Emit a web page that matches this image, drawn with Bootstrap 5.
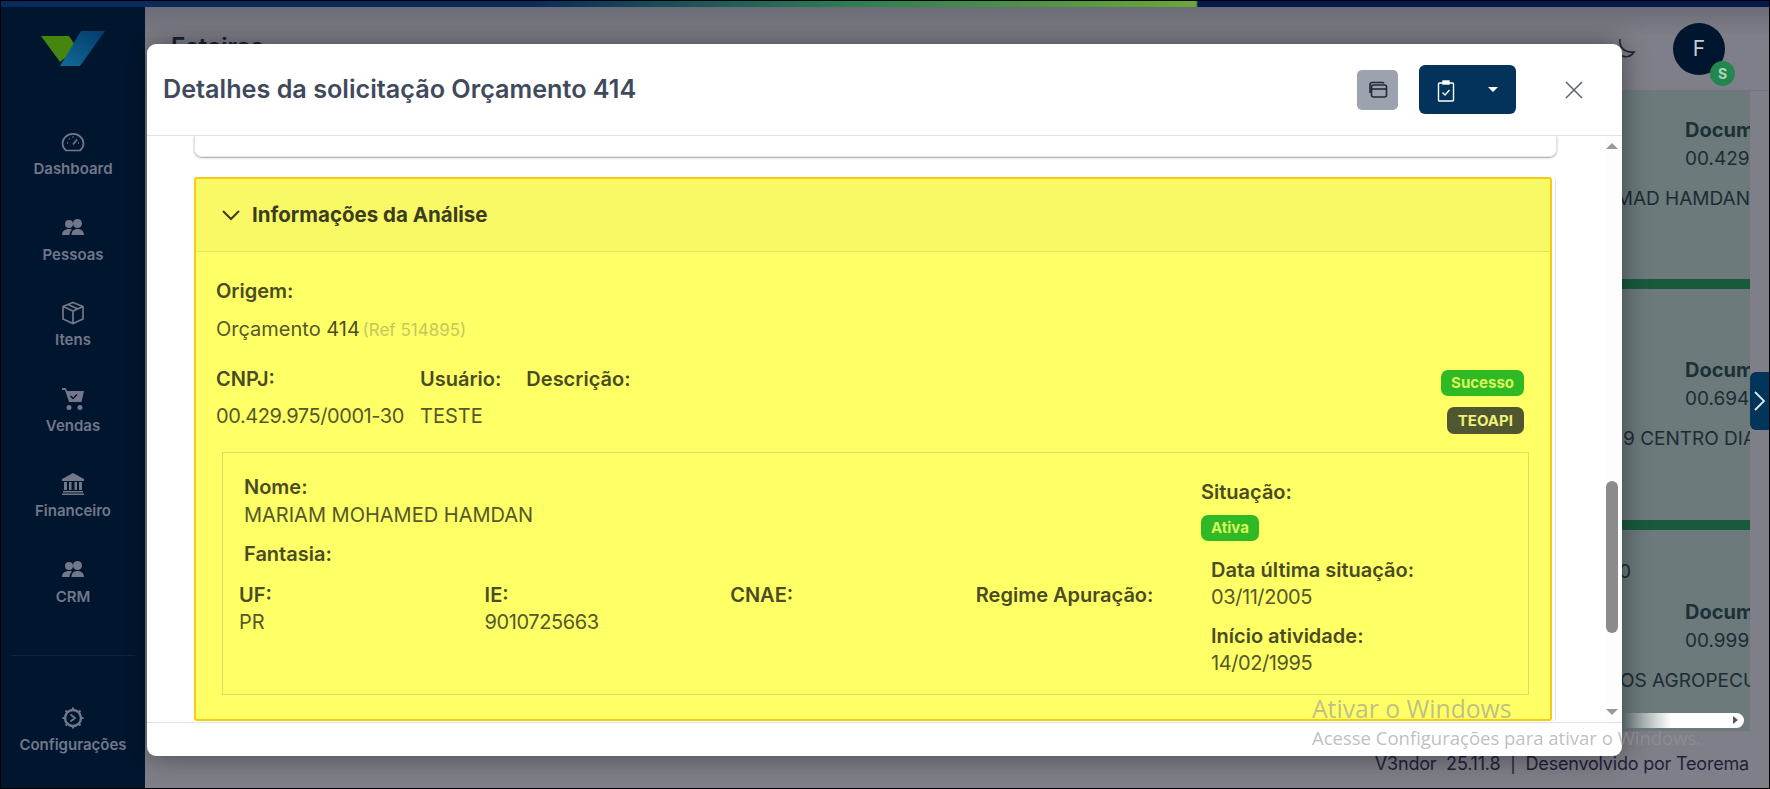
<!DOCTYPE html>
<html lang="pt-BR">
<head>
<meta charset="utf-8">
<title>Detalhes da solicitação</title>
<link href="https://cdn.jsdelivr.net/npm/bootstrap@5.3.0/dist/css/bootstrap.min.css" rel="stylesheet">
<style>
html,body{height:100%;overflow:hidden}
body{font-family:Inter,"Liberation Sans",sans-serif;background:#7f7f89;border:1px solid #000;position:relative}
.topstrip{height:6px;background:linear-gradient(90deg,#0a2a5c 0,#0a2a5c 30%,#2e7d55 48%,#6aa83a 67.6%,#04194c 67.7%,#04194c 100%)}
.shell{height:calc(100% - 6px)}
.sidemenu{width:144px;background:#00162f;color:#73778a;flex:none}
.brandbox{height:123px;flex:none}
.sideitem{height:85.6px;font-size:15px;font-weight:600;flex:none}
.sideitem svg{width:24px;height:24px;margin-bottom:4px}
.sidesep{border-top:1px solid #0e2540;margin:11px 10px 0;flex:none}
.sideitem.sidefoot{margin-top:50px;height:60px}
.mainarea{background:#7f7f89;min-width:0}
.appbar{height:84px;background:linear-gradient(#6c6c76,#7f7f89 35%);border-bottom:1px solid #74747e;padding-right:20px}
.apptitle{font-size:24px;font-weight:600;color:#1d2233;margin-left:26px;margin-top:-4px}
.moonmark{position:absolute;left:1611px;top:36px}
.avatarf{width:52px;height:52px;border-radius:50%;background:#00162f;color:#c9cdd6;font-size:21px;position:relative}
.avatars{position:absolute;right:-10px;bottom:-11px;width:25px;height:25px;border-radius:50%;background:#23864f;color:#a9d8b9;font-size:14px;font-weight:700}
.listpane{background:#6c7a7c;margin:0 19px 0 3px;height:640px;overflow:hidden;position:relative;color:#1c2c33;font-size:19px;line-height:28px}
.docblock{padding-left:1537px;height:188px;white-space:nowrap}
.docblock.midblock{height:231px}
.docblock.lastblock{height:200px}
.docblock b{display:block;font-weight:700;font-size:20px;color:#1b3135;padding-top:25px}
.docblock.midblock b{padding-top:67px}
.docblock.lastblock b{padding-top:68px}
.docdigits{display:block;margin-top:1px}
.docname{position:absolute;white-space:nowrap;margin-top:12px}
.nameone{right:0}
.nametwo{left:1475px}
.namethree{left:1472px}
.orphanzero{position:absolute;left:1471px;top:467px}
.greenbar{height:10px;background:#195a3d}
.hscroll{position:absolute;left:1475px;right:6px;top:622px;height:15px;background:linear-gradient(90deg,#6c7a7c,#fff 40%);border-radius:0 8px 8px 0}
.hscroll:after{content:"";position:absolute;right:6px;top:3px;border-left:5px solid #555;border-top:4px solid transparent;border-bottom:4px solid transparent}
.pagefoot{font-size:18px;letter-spacing:-.2px;line-height:30px;color:#1e2238;text-align:right;padding:18px 20px 0 0;white-space:nowrap}
.sidetab{position:absolute;right:0;top:365px;width:19px;height:58px;background:#03355a;border-radius:6px 0 0 6px;color:#fff}

.modalbox{position:absolute;left:146px;top:43px;width:1475px;height:712px;background:#fff;border-radius:9px;box-shadow:0 0 28px rgba(0,0,0,.45);z-index:5}
.modalhead{height:92px;border-bottom:1px solid #dfe1e8;padding:0 39px 0 16px}
.modalhead h5{font-size:25.2px;font-weight:600;color:#3f4a5c;margin:0}
.btnwin{width:41px;height:40px;background:#9ca3af;border:0;border-radius:5px;margin-right:21px;padding:0}
.btnnavy{width:97px;height:49px;background:#03335a;border:0;border-radius:6px;margin-right:49px;padding:0}
.btnnavy:after{content:"";display:inline-block;border-top:5px solid #fff;border-left:5px solid transparent;border-right:5px solid transparent;margin-left:28px;vertical-align:3px}
.closecross{padding:0;background:none;border:0;line-height:0}
.modalscroll{height:587px;position:relative;overflow:hidden;border-bottom:1px solid #dfe1e8}
.prevcard{height:21px;margin:0 65px 0 47px;border:1px solid #e3e3e6;border-top:0;border-radius:0 0 8px 8px;box-shadow:0 1px 2px rgba(0,0,0,.35)}
.yellowcard{margin:20px 70px 0 47px;height:544px;background:#ffff66;border:2px solid #f5cb15;border-radius:3px;color:#55582a;font-size:20px;box-shadow:3px 0 0 #fff,4px 0 0 #e3e3e6}
.yellowhead{height:73px;background:#f8f965;border-bottom:1px solid #e2e35e;padding-left:25px;color:#3b3d1f;font-size:20.5px;font-weight:700}
.yellowhead svg{margin-right:11px}
.yellowbody{padding:0 0 0 20px;position:relative}
.lbl{font-weight:600;color:#4a4c24;display:block;line-height:27px}
.val{display:block;line-height:27px}
.digitval{letter-spacing:-.42px}
.fadedref{color:#c5c75c;font-size:17px;margin-left:-3px}
.strong414{color:#4a4c24}
.firstlbl{padding-top:26px}
.secondrow{margin-top:22px}
.paircol{margin-right:16px}
.paircol.usercol{margin-right:25px}
.paircol .val{margin-top:10px}
.origval{margin-top:11px}
.pillstack{position:absolute;right:26px;top:118px;gap:11px}
.pillgreen,.pillolive{font-size:15px;font-weight:700;border-radius:7px;padding:0 10px;height:26px;line-height:26px;display:inline-block}
.pillgreen{background:#2fba25;color:#d9f55a}
.pillolive{background:#50562f;color:#eef07a;height:27px;line-height:27px;padding:0 11px}
.innerbox{margin:22px 21px 0 6px;height:243px;border:1px solid #dcde60}
.leftside{width:978px;flex:none}
.topnames{padding:21px 0 0 21px}
.topnames .val{margin-top:1px}
.fantasia{margin-top:12px}
.fourcols{margin:14px 0 0 16px}
.fourcols>div{width:245.6px;flex:none}
.rightside{padding-top:26px}
.pillgreen.activepill{margin:9px 0 16px}
.rightinner{padding-left:10px}
.rightinner .val{margin-bottom:12px}
.vscroll{position:absolute;right:0;top:0;bottom:0;width:16px;background:#fdfdfd}
.arrowup,.arrowdown{position:absolute;left:0;border-left:6px solid transparent;border-right:6px solid transparent}
.arrowup{top:7px;border-bottom:6px solid #999}
.arrowdown{bottom:7px;border-top:6px solid #999}
.thumbbar{position:absolute;left:0;top:345px;width:12px;height:152px;background:#8b8b8b;border-radius:6px}
.watermark{position:absolute;left:1311px;top:692px;z-index:9;color:rgba(150,150,150,.62);font-family:"Open Sans",sans-serif;white-space:nowrap}
.watermark .wm1{font-size:24.7px;line-height:31px}
.watermark .wm2{font-size:18.5px;line-height:27px}
</style>
</head>
<body>
<div class="topstrip"></div>
<div class="shell d-flex">
  <aside class="sidemenu d-flex flex-column">
    <div class="brandbox d-flex justify-content-center pt-4">
      <svg width="64" height="36" viewBox="0 0 64 36"><defs><linearGradient id="lg" x1="0" y1="1" x2="1" y2="0"><stop offset="0" stop-color="#136a9a"/><stop offset="1" stop-color="#023a69"/></linearGradient></defs><path d="M0 5H28L36 17 19 31Z" fill="#46860f"/><path d="M40 0H64L39 35H19Z" fill="url(#lg)"/></svg>
    </div>
    <div class="sideitem d-flex flex-column align-items-center">
      <svg viewBox="0 0 24 24" fill="none" stroke="currentColor" stroke-width="1.7"><path d="M5 20.500a10.500 9.500 0 1 1 14 0Z"/><path d="M12 14.500l4-5M6 13h1M8 8.500l.7.7M12 6.500v1M18 13h-1"/></svg>
      <span>Dashboard</span>
    </div>
    <div class="sideitem d-flex flex-column align-items-center">
      <svg viewBox="0 0 24 24" fill="currentColor"><circle cx="8" cy="8" r="4"/><circle cx="16.500" cy="7.500" r="4.500"/><path d="M1 19c0-4 3-6 7-6 1.500 0 2.500.3 3 .7-1.500 1-2.500 3-2.500 5.300ZM10.500 19c0-4 2.500-6 6-6s6.500 2 6.500 6Z"/></svg>
      <span>Pessoas</span>
    </div>
    <div class="sideitem d-flex flex-column align-items-center">
      <svg viewBox="0 0 24 24" fill="none" stroke="currentColor" stroke-width="1.7"><path d="M12 1.500l10 4v12.500l-10 4.500-10-4.500V5.500ZM2 5.500l10 4.500 10-4.500M12 10v12.500M7 3.500l10 4.500"/></svg>
      <span>Itens</span>
    </div>
    <div class="sideitem d-flex flex-column align-items-center">
      <svg viewBox="0 0 24 24" fill="currentColor"><path d="M1 1h4l1 3h17l-2.500 11H8L4 3H1Z"/><circle cx="8" cy="20.500" r="2.500"/><circle cx="19" cy="20.500" r="2.500"/><path d="M9.500 9l2.500 2.500 4-4" fill="none" stroke="#00162f" stroke-width="1.400"/></svg>
      <span>Vendas</span>
    </div>
    <div class="sideitem d-flex flex-column align-items-center">
      <svg viewBox="0 0 24 24" fill="currentColor"><path d="M12 1l11 6v2H1V7Z"/><path d="M3 10h3v8H3ZM8 10h2.500v8H8ZM13.500 10H16v8h-2.500ZM18 10h3v8h-3ZM2 19h20v1.500H2ZM1 21.500h22V23H1Z"/></svg>
      <span>Financeiro</span>
    </div>
    <div class="sideitem d-flex flex-column align-items-center">
      <svg viewBox="0 0 24 24" fill="currentColor"><circle cx="8" cy="8" r="4"/><circle cx="16.500" cy="7.500" r="4.500"/><path d="M1 19c0-4 3-6 7-6 1.500 0 2.500.3 3 .7-1.500 1-2.500 3-2.500 5.300ZM10.500 19c0-4 2.500-6 6-6s6.500 2 6.500 6Z"/></svg>
      <span>CRM</span>
    </div>
    <div class="sidesep"></div>
    <div class="sideitem sidefoot d-flex flex-column align-items-center">
      <svg viewBox="0 0 24 24" fill="none" stroke="currentColor" stroke-width="2.400"><circle cx="12" cy="12" r="8"/><path d="M12 1.500v3M12 19.500v3M1.500 12h3M19.500 12h3M4.500 4.500l2 2M17.500 17.500l2 2M4.500 19.500l2-2M17.500 6.500l2-2" stroke-width="2"/><path d="M9.500 8.500l4.500 3.500-4.500 3.500" stroke-width="1.800"/></svg>
      <span>Configurações</span>
    </div>
  </aside>
  <main class="mainarea flex-grow-1 position-relative">
    <div class="appbar d-flex align-items-center justify-content-between">
      <div class="apptitle">Esteiras</div>
      <div class="avatarf d-flex align-items-center justify-content-center me-4">F<span class="avatars d-flex align-items-center justify-content-center">S</span></div>
    </div>
    <div class="listpane">
      <div class="docblock"><b>Documento</b><span class="docdigits">00.429.975/0001-30</span><span class="docname nameone">MARIAM MOHAMAD HAMDAN</span></div>
      <div class="greenbar"></div>
      <div class="docblock midblock"><b>Documento</b><span class="docdigits">00.694.000/0001-19</span><span class="docname nametwo">9 CENTRO DIAGNOSTICO</span></div>
      <div class="greenbar"></div>
      <div class="docblock lastblock"><b>Documento</b><span class="docdigits">00.999.000/0001-00</span><span class="docname namethree">OS AGROPECUARIOS LTDA</span></div>
      <span class="orphanzero">0</span>
      <div class="hscroll"></div>
    </div>
    <div class="pagefoot">V3ndor&nbsp; 25.11.8 &nbsp;|&nbsp; Desenvolvido por Teorema</div>
    <div class="sidetab d-flex align-items-center justify-content-center">
      <svg width="13" height="22" viewBox="0 0 13 22" fill="none" stroke="#dfe6ee" stroke-width="1.800"><path d="M2 2l9 9-9 9"/></svg>
    </div>
  </main>
</div>
<svg class="moonmark" width="24" height="24" viewBox="0 0 24 24" fill="none" stroke="#23263a" stroke-width="1.600"><path d="M8 2c-1 8 4 14 14 13-3 5-9 6-13 3"/></svg>

<div class="modalbox d-flex flex-column">
  <div class="modalhead d-flex align-items-center">
    <h5 class="flex-grow-1">Detalhes da solicitação Orçamento 414</h5>
    <button class="btnwin d-flex align-items-center justify-content-center" type="button">
      <svg width="20" height="20" viewBox="0 0 20 20" fill="none" stroke="#23283a" stroke-width="1.600"><path d="M2 13V4.500A2 2 0 0 1 4 2.500h10a2 2 0 0 1 2 .8"/><rect x="3.500" y="5" width="15" height="12" rx="2"/><path d="M3.500 9h15"/></svg>
    </button>
    <button class="btnnavy" type="button">
      <svg width="18" height="22" viewBox="0 0 18 22" fill="none" stroke="#fff" stroke-width="1.400"><rect x="1.500" y="3" width="15" height="18" rx="1"/><rect x="6" y="1" width="6" height="3" fill="#fff"/><path d="M5.500 12.500l2.500 2.500 4.500-5"/></svg>
    </button>
    <button class="closecross" type="button" aria-label="Fechar">
      <svg width="18" height="18" viewBox="0 0 18 18" stroke="#5b6270" stroke-width="1.500"><path d="M1 1l16 16M17 1L1 17"/></svg>
    </button>
  </div>
  <div class="modalscroll">
    <div class="prevcard"></div>
    <div class="yellowcard">
      <div class="yellowhead d-flex align-items-center">
        <svg width="20" height="12" viewBox="0 0 20 12" fill="none" stroke="#3b3d1f" stroke-width="2"><path d="M2 2l8 8 8-8"/></svg>
        Informações da Análise
      </div>
      <div class="yellowbody">
        <div class="firstlbl">
          <span class="lbl">Origem:</span>
          <span class="val origval">Orçamento <span class="strong414">414</span> <span class="fadedref">(Ref 514895)</span></span>
        </div>
        <div class="d-flex secondrow">
          <div class="paircol"><span class="lbl">CNPJ:</span><span class="val digitval">00.429.975/0001-30</span></div>
          <div class="paircol usercol"><span class="lbl">Usuário:</span><span class="val">TESTE</span></div>
          <div class="paircol"><span class="lbl">Descrição:</span></div>
        </div>
        <div class="pillstack d-flex flex-column align-items-end">
          <span class="pillgreen">Sucesso</span>
          <span class="pillolive">TEOAPI</span>
        </div>
        <div class="innerbox d-flex">
          <div class="leftside">
            <div class="topnames">
              <span class="lbl">Nome:</span>
              <span class="val">MARIAM MOHAMED HAMDAN</span>
              <span class="lbl fantasia">Fantasia:</span>
            </div>
            <div class="fourcols d-flex">
              <div><span class="lbl">UF:</span><span class="val">PR</span></div>
              <div><span class="lbl">IE:</span><span class="val digitval">9010725663</span></div>
              <div><span class="lbl">CNAE:</span></div>
              <div><span class="lbl">Regime Apuração:</span></div>
            </div>
          </div>
          <div class="rightside">
            <span class="lbl">Situação:</span>
            <span class="pillgreen activepill">Ativa</span>
            <div class="rightinner">
              <span class="lbl">Data última situação:</span><span class="val digitval">03/11/2005</span>
              <span class="lbl">Início atividade:</span><span class="val digitval">14/02/1995</span>
            </div>
          </div>
        </div>
      </div>
    </div>
    <div class="vscroll"><i class="arrowup"></i><i class="thumbbar"></i><i class="arrowdown"></i></div>
  </div>
</div>
<div class="watermark"><div class="wm1">Ativar o Windows</div><div class="wm2">Acesse Configurações para ativar o Windows.</div></div>
<script src="https://cdn.jsdelivr.net/npm/bootstrap@5.3.0/dist/js/bootstrap.bundle.min.js"></script>
</body>
</html>
